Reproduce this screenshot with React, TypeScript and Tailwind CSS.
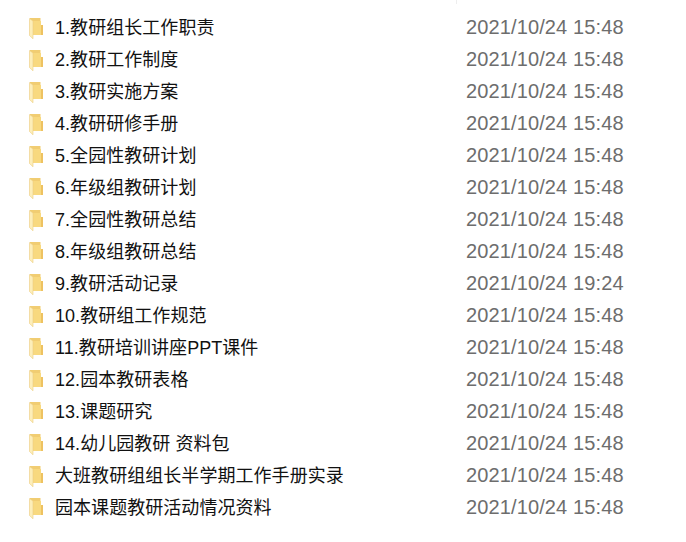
const rows = [
  ['1.教研组长工作职责', '2021/10/24 15:48'],
  ['2.教研工作制度', '2021/10/24 15:48'],
  ['3.教研实施方案', '2021/10/24 15:48'],
  ['4.教研研修手册', '2021/10/24 15:48'],
  ['5.全园性教研计划', '2021/10/24 15:48'],
  ['6.年级组教研计划', '2021/10/24 15:48'],
  ['7.全园性教研总结', '2021/10/24 15:48'],
  ['8.年级组教研总结', '2021/10/24 15:48'],
  ['9.教研活动记录', '2021/10/24 19:24'],
  ['10.教研组工作规范', '2021/10/24 15:48'],
  ['11.教研培训讲座PPT课件', '2021/10/24 15:48'],
  ['12.园本教研表格', '2021/10/24 15:48'],
  ['13.课题研究', '2021/10/24 15:48'],
  ['14.幼儿园教研 资料包', '2021/10/24 15:48'],
  ['大班教研组组长半学期工作手册实录', '2021/10/24 15:48'],
  ['园本课题教研活动情况资料', '2021/10/24 15:48'],
]

const FolderIcon = () => (
  <svg width="15" height="21" viewBox="0 0 15 21" className="shrink-0">
    {/* back of the folder */}
    <path d="M1 0h10.5v17H1z" fill="#f1cd72" />
    <path d="M11.5 7H14v10h-2.5z" fill="#eec261" />
    {/* inner sheet */}
    <path d="M4 3h8v14H4z" fill="#f8d97f" />
    {/* open flap */}
    <path d="M0.5 0.5L4 3V20.8L0.5 17.5z" fill="#fdeeb9" stroke="#eccd80" strokeWidth="0.6" />
  </svg>
)

export default function App() {
  return (
    <div className="relative w-[686px] h-[542px] bg-white overflow-hidden font-['Liberation_Sans','Noto_Sans_CJK_SC',sans-serif]">
      <div className="absolute left-[456px] top-0 w-px h-[4px] bg-[#eeeeee]" />
      <div className="flex flex-col pt-[12px] pl-[29px]">
        {rows.map(([name, date]) => (
          <div key={name} className="flex items-center h-[32px]">
            <FolderIcon />
            <span className="ml-[11px] w-[411px] text-[18px] tracking-[0.05px] text-[#111111] whitespace-nowrap">{name}</span>
            <span className="pb-[2px] text-[20px] tracking-[0.12px] text-[#6d6d6d] whitespace-nowrap">{date}</span>
          </div>
        ))}
      </div>
    </div>
  )
}
